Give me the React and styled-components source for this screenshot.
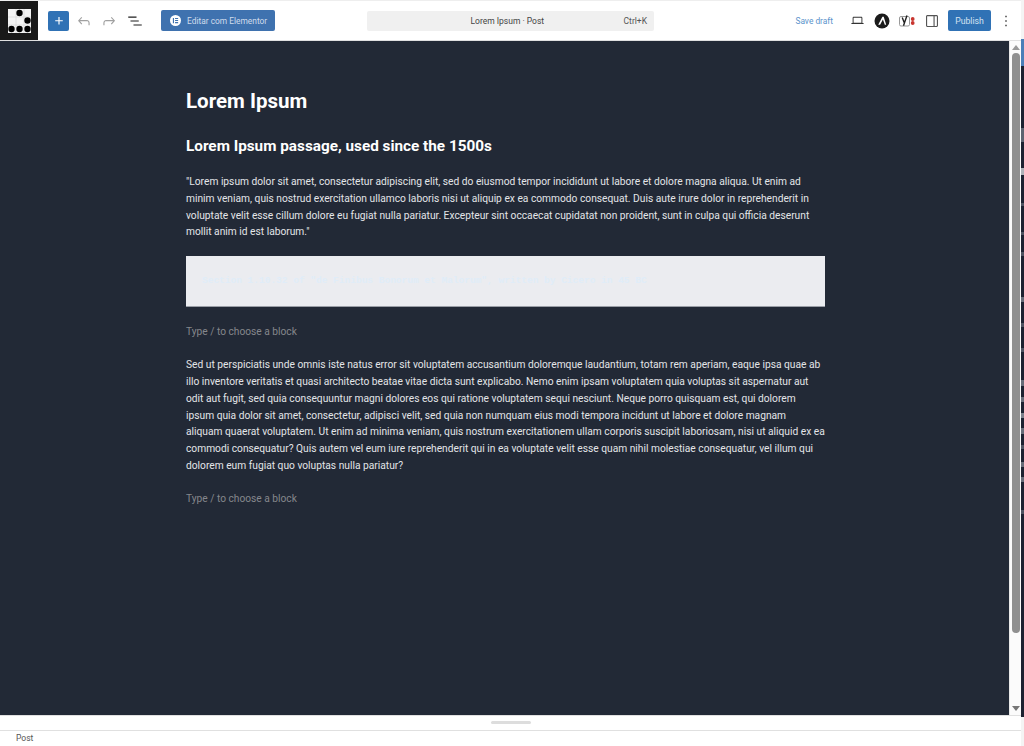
import React from 'react';
import styled, { createGlobalStyle } from 'styled-components';

const GlobalStyle = createGlobalStyle`
  html, body {
    margin: 0;
    height: 100%;
    overflow: hidden;
    background: #fff;
  }
  * { box-sizing: border-box; }
`;

// what shows of the page behind the editor, on the right edge: [height, colour]
const EDGE_BANDS = [
  [39, '#f4f4f4'], [27, '#4a7fb8'], [62, '#1c2231'], [14, '#5d6370'], [26, '#1c2231'],
  [7, '#aeb2b8'], [28, '#1c2231'], [3, '#4d5361'], [26, '#1c2231'], [3, '#4d5361'],
  [17, '#1c2231'], [4, '#4d5361'], [41, '#1c2231'], [5, '#666c78'], [21, '#1c2231'],
  [4, '#4d5361'], [21, '#1c2231'], [4, '#4d5361'], [28, '#1c2231'], [6, '#666c78'],
  [11, '#1c2231'], [5, '#666c78'], [11, '#1c2231'], [5, '#7a808b'], [10, '#1c2231'],
  [6, '#666c78'], [11, '#1c2231'], [4, '#4d5361'], [13, '#1c2231'], [5, '#666c78'],
  [10, '#1c2231'], [5, '#666c78'], [28, '#1c2231'], [4, '#4d5361'], [203, '#1c2231'],
  [31, '#f4f4f4'],
];

const Page = styled.div`
  width: 1024px;
  height: 746px;
  display: flex;
  font-family: Roboto, "Liberation Sans", sans-serif;
  color: #1e1e1e;
`;

const EditorWindow = styled.div`
  width: 1021px;
  height: 746px;
  flex: none;
  display: flex;
  flex-direction: column;
`;

const BehindEdge = styled.div`
  flex: 1;
  display: flex;
  flex-direction: column;
`;

const EdgeBand = styled.div`
  height: ${p => p.$height}px;
  flex: none;
  background: ${p => p.$color};
`;

const TopBar = styled.header`
  height: 41px;
  flex: none;
  display: flex;
  align-items: center;
  background: #fff;
  border-top: 1px solid #eee;
  border-bottom: 1px solid #e0e0e0;
`;

const LogoBox = styled.div`
  width: 38px;
  height: 39px;
  background: #191919;
  display: flex;
  align-items: center;
  justify-content: center;
`;

const AddButton = styled.button`
  width: 21px;
  height: 20px;
  margin-left: 10px;
  padding: 0;
  border: 0;
  border-radius: 2px;
  background: #3072b5;
  display: flex;
  align-items: center;
  justify-content: center;
`;

const ToolIcon = styled.span`
  display: flex;
  align-items: center;
  justify-content: center;
  width: ${p => p.$width || 18}px;
  height: 18px;
  margin-left: ${p => p.$gap || 0}px;
  color: ${p => p.$color || '#1e1e1e'};
`;

const ElementorButton = styled.button`
  width: 114px;
  height: 21px;
  margin-left: 17px;
  padding: 0 0 0 9px;
  border: 0;
  border-radius: 2px;
  background: #3f72af;
  color: #cfdcec;
  font: 400 8.4px Roboto, sans-serif;
  white-space: nowrap;
  display: flex;
  align-items: center;
  gap: 6px;
`;

const ElementorMark = styled.span`
  width: 11px;
  height: 11px;
  border-radius: 50%;
  background: #fff;
  display: flex;
  align-items: center;
  justify-content: center;
`;

const CommandBar = styled.div`
  width: 287px;
  height: 20px;
  margin-left: 92px;
  padding: 0 7px 0 0;
  border-radius: 2px;
  background: #f0f0f0;
  font-size: 8.5px;
  color: #444;
  display: flex;
  align-items: center;
`;

const CommandTitle = styled.span`
  flex: 1;
  text-align: center;
  padding-left: 24px;
`;

const ShortcutHint = styled.span`
  color: #555;
`;

const RightTools = styled.div`
  margin-left: auto;
  padding-right: 6px;
  display: flex;
  align-items: center;
`;

const SaveLink = styled.span`
  font-size: 8.4px;
  color: #5b93cb;
  margin-right: 15px;
`;

const PublishButton = styled.button`
  width: 43px;
  height: 21px;
  margin-left: 7px;
  padding: 0;
  border: 0;
  border-radius: 2px;
  background: #3072b5;
  color: #d5e3f1;
  font: 400 8.7px Roboto, sans-serif;
`;

const MoreButton = styled.span`
  display: flex;
  margin-left: 6px;
  width: 18px;
  justify-content: center;
`;

const Workspace = styled.div`
  flex: 1;
  min-height: 0;
  display: flex;
`;

const Canvas = styled.main`
  width: 1009px;
  background: #222936;
  padding: 48px 0 0 186px;
  color: #e3e5e8;
`;

const Column = styled.div`
  width: 639px;
`;

const PostTitle = styled.h1`
  margin: 0;
  font-size: 20.5px;
  line-height: 25px;
  font-weight: 700;
  color: #fff;
`;

const Heading = styled.h2`
  margin: 22px 0 0;
  font-size: 15.3px;
  line-height: 20px;
  font-weight: 700;
  color: #fff;
`;

const Paragraph = styled.p`
  margin: ${p => p.$top}px 0 0;
  font-size: 10.22px;
  line-height: 16.8px;
`;

const CodeBlock = styled.pre`
  margin: 15px 0 0;
  height: 51px;
  padding: 0 0 0 16px;
  background: #ebecf0;
  border-bottom: 1px solid #9a9ea6;
  color: #e0ecf8;
  font: 700 9.5px/50px "Liberation Mono", monospace;
`;

const Placeholder = styled.p`
  margin: ${p => p.$top}px 0 0;
  font-size: 10.2px;
  line-height: 17px;
  color: #85878c;
`;

const ScrollTrack = styled.div`
  width: 12px;
  background: #fbfbfb;
  border-left: 1px solid #e8e8e8;
  display: flex;
  flex-direction: column;
  align-items: center;
`;

const ArrowUp = styled.span`
  margin-top: 4px;
  border: 4px solid transparent;
  border-top: 0;
  border-bottom: 5px solid #999;
`;

const ScrollThumb = styled.div`
  width: 8px;
  height: 580px;
  margin-top: 3px;
  border-radius: 4px;
  background: #909090;
`;

const ArrowDown = styled.span`
  margin-top: auto;
  margin-bottom: 4px;
  border: 4px solid transparent;
  border-bottom: 0;
  border-top: 5px solid #777;
`;

const ResizeArea = styled.div`
  height: 15px;
  flex: none;
  background: #fff;
  border-top: 1px solid #e0e0e0;
  display: flex;
  justify-content: center;
  padding-top: 5px;
`;

const ResizeHandle = styled.span`
  width: 40px;
  height: 3px;
  border-radius: 2px;
  background: #ddd;
`;

const StatusBar = styled.footer`
  height: 16px;
  flex: none;
  background: #fff;
  border-top: 1px solid #e0e0e0;
  padding-left: 16px;
  font-size: 8.5px;
  line-height: 15px;
  color: #555;
`;

const LogoMark = () => (
  <svg width="23" height="24" viewBox="0 0 23 24">
    <rect width="23" height="24" fill="#f4f4f4" />
    <path d="M0 8h23M0 16h23M8 0v24M16 0v24" stroke="#ccc" strokeWidth="0.5" />
    <circle cx="11.500" cy="4" r="3.200" fill="#000" />
    <circle cx="19.500" cy="11.500" r="3.200" fill="#000" />
    <circle cx="3.500" cy="20" r="3.200" fill="#000" />
    <circle cx="11.500" cy="20" r="3.200" fill="#000" />
    <circle cx="19.500" cy="20" r="3.200" fill="#000" />
  </svg>
);

const UndoIcon = () => (
  <svg width="18" height="18" viewBox="0 0 24 24" fill="currentColor">
    <path d="M18.300 11.700c-.6-.6-1.400-.9-2.300-.9H6.700l2.900-3.300-1.100-1L4 11.500l4.500 5 1.100-1-2.900-3.300H16c.5 0 .9.2 1.300.5.4.3.7.9.7 1.800v3h1.500v-3c0-1.200-.4-2.100-1.200-2.800z" />
  </svg>
);

const RedoIcon = () => (
  <svg width="18" height="18" viewBox="0 0 24 24" fill="currentColor">
    <path d="M15.600 6.500l-1.100 1 2.900 3.300H8c-.9 0-1.700.3-2.300.9-.7.7-1.200 1.600-1.200 2.800v3H6v-3c0-.9.3-1.500.7-1.800.4-.3.8-.5 1.300-.5h9.400l-2.900 3.300 1.100 1 4.500-5-4.500-5z" />
  </svg>
);

const ListViewIcon = () => (
  <svg width="18" height="18" viewBox="0 0 24 24" fill="currentColor">
    <path d="M3 6h11v1.500H3V6zm3 5.250h11v1.500H6v-1.500zM10 16.500h11V18H10v-1.500z" />
  </svg>
);

const LaptopIcon = () => (
  <svg width="15" height="15" viewBox="0 0 24 24" fill="currentColor">
    <path d="M20.500 16h-.7V8c0-1.100-.9-2-2-2H6.200c-1.100 0-2 .9-2 2v8h-.7c-.8 0-1.500.7-1.500 1.500h20c0-.8-.7-1.500-1.500-1.500zM5.700 8c0-.3.2-.5.5-.5h11.600c.3 0 .5.2.5.5v7.600H5.700V8z" />
  </svg>
);

const AstraIcon = () => (
  <svg width="18" height="18" viewBox="0 0 18 18">
    <circle cx="9" cy="9" r="7.500" fill="#1b1b1b" />
    <path d="M9.400 4.800L5.200 12.800h1.900L9.900 7.500l1.900 5.300h1.400L10.700 4.800z" fill="#fff" />
  </svg>
);

const YoastIcon = () => (
  <svg width="20" height="18" viewBox="0 0 20 18">
    <rect x="1.500" y="4.500" width="10" height="9.500" rx="1.500" fill="none" stroke="#999" strokeWidth="1" />
    <path d="M4.200 5.500l2.200 5.500L9 3.500M6.400 11l-.9 2.800" fill="none" stroke="#222" strokeWidth="1.400" />
    <circle cx="14.700" cy="7" r="1.900" fill="#c8352f" />
    <circle cx="14.700" cy="11" r="1.900" fill="#c8352f" />
  </svg>
);

const SidebarIcon = () => (
  <svg width="18" height="18" viewBox="0 0 24 24" fill="currentColor">
    <path d="M18 4H6c-1.100 0-2 .9-2 2v12c0 1.100.9 2 2 2h12c1.100 0 2-.9 2-2V6c0-1.100-.9-2-2-2zM5.500 18V6c0-.3.2-.5.5-.5h8v13H6c-.3 0-.5-.2-.5-.5zm13 0c0 .3-.2.5-.5.5h-2.500v-13H18c.3 0 .5.2.5.5v12z" />
  </svg>
);

const App = () => (
  <Page>
    <GlobalStyle />
    <EditorWindow>
      <TopBar>
        <LogoBox><LogoMark /></LogoBox>
        <AddButton>
          <svg width="14" height="14" viewBox="0 0 24 24" fill="#fff">
            <path d="M11 12.500V18h2v-5.500h5.500v-2H13V5h-2v5.500H5.500v2H11z" />
          </svg>
        </AddButton>
        <ToolIcon $gap={6} $color="#a0a0a0"><UndoIcon /></ToolIcon>
        <ToolIcon $gap={7} $color="#a0a0a0"><RedoIcon /></ToolIcon>
        <ToolIcon $gap={8}><ListViewIcon /></ToolIcon>
        <ElementorButton>
          <ElementorMark>
            <svg width="7" height="7" viewBox="0 0 8 8" fill="#3f72af">
              <path d="M1 1h1.300v6H1zM3.500 1H7v1.200H3.500zM3.500 3.400H7v1.200H3.500zM3.500 5.800H7V7H3.500z" />
            </svg>
          </ElementorMark>
          Editar com Elementor
        </ElementorButton>
        <CommandBar>
          <CommandTitle>Lorem Ipsum · Post</CommandTitle>
          <ShortcutHint>Ctrl+K</ShortcutHint>
        </CommandBar>
        <RightTools>
          <SaveLink>Save draft</SaveLink>
          <ToolIcon $color="#333"><LaptopIcon /></ToolIcon>
          <ToolIcon $gap={7}><AstraIcon /></ToolIcon>
          <ToolIcon $gap={7} $width={20}><YoastIcon /></ToolIcon>
          <ToolIcon $gap={5} $color="#555"><SidebarIcon /></ToolIcon>
          <PublishButton>Publish</PublishButton>
          <MoreButton>
            <svg width="18" height="18" viewBox="0 0 24 24" fill="#444">
              <path d="M13 19h-2v-2h2v2zm0-6h-2v-2h2v2zm0-6h-2V5h2v2z" />
            </svg>
          </MoreButton>
        </RightTools>
      </TopBar>
      <Workspace>
        <Canvas>
          <Column>
            <PostTitle>Lorem Ipsum</PostTitle>
            <Heading>Lorem Ipsum passage, used since the 1500s</Heading>
            <Paragraph $top={18}>
              "Lorem ipsum dolor sit amet, consectetur adipiscing elit, sed do eiusmod tempor incididunt ut labore et dolore magna aliqua. Ut enim ad minim veniam, quis nostrud exercitation ullamco laboris nisi ut aliquip ex ea commodo consequat. Duis aute irure dolor in reprehenderit in voluptate velit esse cillum dolore eu fugiat nulla pariatur. Excepteur sint occaecat cupidatat non proident, sunt in culpa qui officia deserunt mollit anim id est laborum."
            </Paragraph>
            <CodeBlock>Section 1.10.32 of "de Finibus Bonorum et Malorum", written by Cicero in 45 BC</CodeBlock>
            <Placeholder $top={16}>Type / to choose a block</Placeholder>
            <Paragraph $top={17}>
              Sed ut perspiciatis unde omnis iste natus error sit voluptatem accusantium doloremque laudantium, totam rem aperiam, eaque ipsa quae ab illo inventore veritatis et quasi architecto beatae vitae dicta sunt explicabo. Nemo enim ipsam voluptatem quia voluptas sit aspernatur aut odit aut fugit, sed quia consequuntur magni dolores eos qui ratione voluptatem sequi nesciunt. Neque porro quisquam est, qui dolorem ipsum quia dolor sit amet, consectetur, adipisci velit, sed quia non numquam eius modi tempora incidunt ut labore et dolore magnam aliquam quaerat voluptatem. Ut enim ad minima veniam, quis nostrum exercitationem ullam corporis suscipit laboriosam, nisi ut aliquid ex ea commodi consequatur? Quis autem vel eum iure reprehenderit qui in ea voluptate velit esse quam nihil molestiae consequatur, vel illum qui dolorem eum fugiat quo voluptas nulla pariatur?
            </Paragraph>
            <Placeholder $top={15}>Type / to choose a block</Placeholder>
          </Column>
        </Canvas>
        <ScrollTrack>
          <ArrowUp />
          <ScrollThumb />
          <ArrowDown />
        </ScrollTrack>
      </Workspace>
      <ResizeArea><ResizeHandle /></ResizeArea>
      <StatusBar>Post</StatusBar>
    </EditorWindow>
    <BehindEdge>
      {EDGE_BANDS.map(([height, color], i) => (
        <EdgeBand key={i} $height={height} $color={color} />
      ))}
    </BehindEdge>
  </Page>
);

export default App;
